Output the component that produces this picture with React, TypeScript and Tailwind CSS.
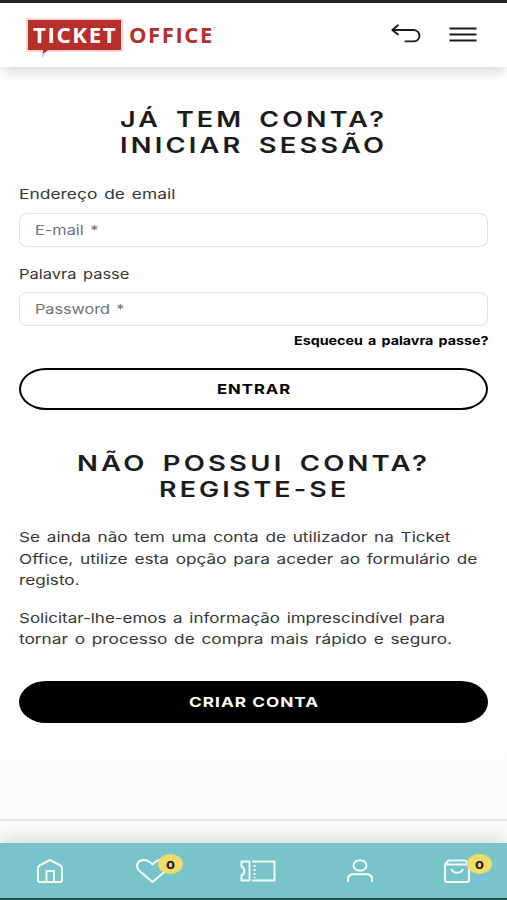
import { useLayoutEffect, useRef, useState, type ReactNode } from 'react';
import clsx from 'clsx';

type WideTextProps = {
  width: number;
  className?: string;
  children: string;
};

/**
 * One line of text, expanded horizontally to the given width
 */
const WideText = ({ width, className, children }: WideTextProps) => {
  const ref = useRef<HTMLSpanElement>(null);
  const [scale, setScale] = useState(1);

  useLayoutEffect(() => {
    if (ref.current) setScale(width / ref.current.offsetWidth);
  }, [width, children]);

  return (
    <span className={clsx('block text-left', className)} style={{ width }}>
      <span ref={ref} className="inline-block origin-left whitespace-nowrap" style={{ transform: `scaleX(${scale})` }}>
        {children}
      </span>
    </span>
  );
};

const Logo = () => (
  <div className="relative ml-[26px] mt-[15px] flex h-[34px] items-center">
    <div className="flex h-[34px] w-[97px] items-center justify-center border-2 border-[#f6d5d2] bg-[#b72f2b]">
      <WideText width={84} className="font-['Open_Sans',sans-serif] text-[21px] leading-[31px] font-bold tracking-[1.5px] text-white">
        TICKET
      </WideText>
    </div>
    <WideText width={85} className="ml-[6px] font-['Open_Sans',sans-serif] text-[21px] leading-[31px] font-bold tracking-[1.5px] text-[#b72f2b]">
      OFFICE
    </WideText>
    <span className="absolute top-[9px] left-[187px] text-[4px] leading-none text-[#b72f2b]">™</span>
    <svg className="absolute top-[31px] left-[14px]" width="10" height="9" fill="none">
      <path d="M3 1v4l5-4z" fill="#b72f2b" />
      <path d="M2.500 3v4.500l2-2" stroke="#f0c4cb" strokeWidth="1.3" />
    </svg>
  </div>
);

const Header = () => (
  <header className="relative flex h-[67px] items-start border-t-[3px] border-[#222] bg-white shadow-[0_7px_12px_-3px_rgba(0,0,0,0.16)]">
    <Logo />
    <button className="mt-[20px] ml-auto" aria-label="Voltar">
      <svg width="32" height="22" viewBox="0 0 32 22" fill="none" stroke="#1c1c1c" strokeWidth="1.900" strokeLinecap="round" strokeLinejoin="round">
        <path d="M3 7h20c4 0 6.500 2.500 6.500 5.700s-2.500 5.700-6.500 5.700h-7.500" />
        <path d="M8 2.300 2.300 7 8 11.500" />
      </svg>
    </button>
    <button className="mt-[23px] mr-[30px] ml-[27px]" aria-label="Menu">
      <svg width="28" height="16" fill="none" stroke="#1c1c1c" strokeWidth="2">
        <path d="M.5 2.500h27M.5 8.500h27M.5 14.500h27" />
      </svg>
    </button>
  </header>
);

const INPUT = 'block h-[34px] w-full rounded-[9px/7px] border-[1.5px] border-[#dfe3e5] bg-white px-[15px]';

type FieldProps = {
  label: string;
  labelWidth: number;
  placeholder: string;
  placeholderWidth: number;
};

const Field = ({ label, labelWidth, placeholder, placeholderWidth }: FieldProps) => (
  <label className="block">
    <WideText width={labelWidth} className="mb-[7px]">
      {label}
    </WideText>
    <span className={INPUT}>
      <WideText width={placeholderWidth} className="leading-[32px] text-[#6d7378]">
        {placeholder}
      </WideText>
    </span>
  </label>
);

const TITLE = 'flex flex-col items-center text-[21.5px] leading-[25.7px] font-semibold tracking-[2.5px] [word-spacing:4px] text-[#1b1b1b]';
const PILL = 'flex h-[42px] w-full items-center justify-center rounded-[27px/21px] border-2 border-black pt-px text-[13.5px] font-bold tracking-[0.8px]';

const Badge = ({ className }: { className: string }) => (
  <span className={clsx('absolute flex h-[20px] w-[25px] items-center justify-center rounded-[50%] bg-[#f0dc69]', className)}>
    <WideText width={9} className="text-[13px] leading-[18px] font-bold text-[#222]">
      o
    </WideText>
  </span>
);

const NavItem = ({ label, className, children }: { label: string; className: string; children: ReactNode }) => (
  <button aria-label={label} className={clsx('relative h-[26px]', className)}>
    {children}
  </button>
);

const BottomNav = () => (
  <nav className="relative flex h-[57px] items-start border-b-2 border-[#294b50] bg-[#79c3cb] pt-[15px] text-[#f2fdff] shadow-[0_-8px_18px_-2px_rgba(0,0,0,0.12)]">
    <NavItem label="Início" className="ml-[36px]">
      <svg width="28" height="26" fill="none" stroke="currentColor" strokeWidth="2" strokeLinejoin="round">
        <path d="M2 10q0-1.500 1.500-2.500L14 2l10.500 5.500Q26 8.500 26 10v12q0 2-2 2H4q-2 0-2-2z" />
        <path d="M10.500 24V13h7.500v11" />
      </svg>
    </NavItem>
    <NavItem label="Favoritos" className="ml-[71px]">
      <svg width="34" height="26" fill="none" stroke="currentColor" strokeWidth="2" strokeLinejoin="round">
        <path d="M17.500 24 4.500 13C1 9.800 1.300 4.800 5 3c4-2 8.500-.8 12.500 3.500C21.500 2.200 26 1 30 3c3.700 1.800 4 6.800.5 10z" />
      </svg>
      <Badge className="top-[-4px] left-[23px]" />
    </NavItem>
    <NavItem label="Bilhetes" className="ml-[70px]">
      <svg width="38" height="26" fill="none" stroke="currentColor" strokeWidth="2">
        <path d="M10.500 3.500H2.500v5c3.700 1.500 3.700 7.500 0 9v5h8zM13 3.500h22.500v19H13" strokeLinejoin="round" />
        <path d="M15.500 7v13" strokeDasharray="2 2" />
      </svg>
    </NavItem>
    <NavItem label="Conta" className="ml-[69px]">
      <svg width="28" height="26" fill="none" stroke="currentColor" strokeWidth="2">
        <ellipse cx="14" cy="7.500" rx="6.500" ry="5.300" />
        <path d="M2 24v-3c0-3.200 2-4.800 5.500-4.800h13c3.500 0 5.500 1.600 5.500 4.800v3" />
      </svg>
    </NavItem>
    <NavItem label="Carrinho" className="ml-[69px]">
      <svg width="28" height="26" fill="none" stroke="currentColor" strokeWidth="2" strokeLinejoin="round">
        <path d="M2 6.500 5.500 2.500h17L26 6.500V22q0 2-2 2H4q-2 0-2-2zM2 6.500h24" />
        <path d="M8.500 11c1.500 5 9.500 5 11.500 0" />
      </svg>
      <Badge className="top-[-4px] left-[24px]" />
    </NavItem>
  </nav>
);

const App = () => (
  <div className="flex h-[900px] w-[507px] flex-col overflow-hidden bg-[#fefefe] font-['Inter','Liberation_Sans',sans-serif] text-[13.5px] leading-[21.5px] [word-spacing:1.5px] text-[#34373a]">
    <Header />
    <main className="flex-1 bg-linear-to-b from-[#fefefe] from-85% to-[#fbfbfb] px-[19px]">
      <h1 className={clsx(TITLE, 'pt-[40px]')}>
        <WideText width={267}>JÁ TEM CONTA?</WideText>
        <WideText width={267}>INICIAR SESSÃO</WideText>
      </h1>
      <div className="mt-[26px] flex flex-col gap-[17px]">
        <Field label="Endereço de email" labelWidth={156} placeholder="E-mail *" placeholderWidth={63} />
        <Field label="Palavra passe" labelWidth={111} placeholder="Password *" placeholderWidth={90} />
      </div>
      <a className="mt-[4px] flex justify-end text-[12px] font-bold text-black">
        <WideText width={194}>Esqueceu a palavra passe?</WideText>
      </a>
      <button className={clsx(PILL, 'mt-[16px] bg-white text-black')}>
        <WideText width={74}>ENTRAR</WideText>
      </button>
      <h2 className={clsx(TITLE, 'mt-[41px]')}>
        <WideText width={353}>NÃO POSSUI CONTA?</WideText>
        <WideText width={190}>REGISTE-SE</WideText>
      </h2>
      <div className="mt-[25px]">
        <WideText width={431}>Se ainda não tem uma conta de utilizador na Ticket</WideText>
        <WideText width={458}>Office, utilize esta opção para aceder ao formulário de</WideText>
        <WideText width={61}>registo.</WideText>
      </div>
      <div className="mt-[16px]">
        <WideText width={426}>Solicitar-lhe-emos a informação imprescindível para</WideText>
        <WideText width={433}>tornar o processo de compra mais rápido e seguro.</WideText>
      </div>
      <button className={clsx(PILL, 'mt-[30px] bg-black text-white')}>
        <WideText width={130}>CRIAR CONTA</WideText>
      </button>
    </main>
    <div className="h-[24px] border-t-2 border-[#ebebeb] bg-[#fbfbfb]" />
    <BottomNav />
  </div>
);

export default App;
